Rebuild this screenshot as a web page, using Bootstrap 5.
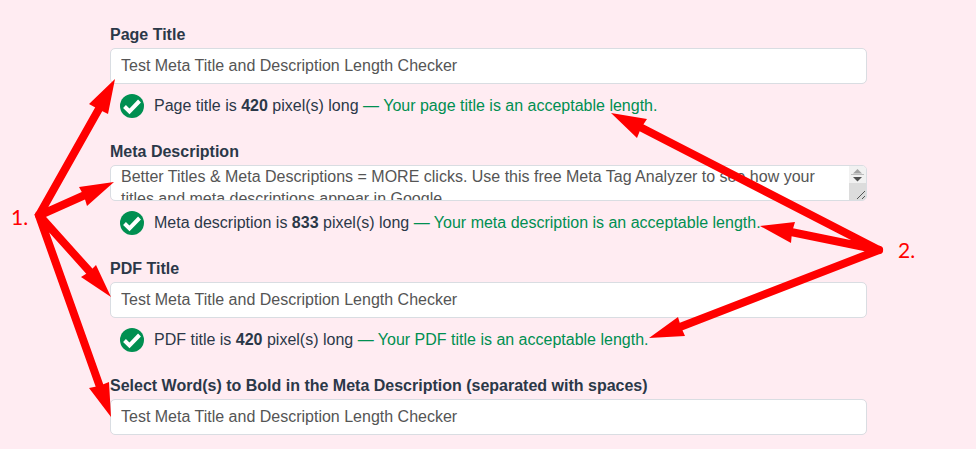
<!DOCTYPE html>
<html lang="en">
<head>
<meta charset="utf-8">
<meta name="viewport" content="width=device-width, initial-scale=1">
<title>Meta Title and Description Length Checker</title>
<link href="https://cdn.jsdelivr.net/npm/bootstrap@5.3.0/dist/css/bootstrap.min.css" rel="stylesheet">
<style>
body { background: #ffecf2; color: #2b3848; font: 16px/24px "Liberation Sans", Arial, sans-serif; }
.checker { padding: 23px 109px 14px 110px; }
.field + .field { margin-top: 22px; }
.field-label { display: block; font-weight: 700; margin-bottom: 1px; }
.field .form-control { height: 36px; padding: 5px 10px; border-color: #d9dde2; border-radius: 5px; color: #555; font-size: 16px; line-height: 24px; }
.field textarea.form-control { min-height: 36px; padding: 0 28px 0 10px; line-height: 22px; resize: none; overflow: hidden; }
.scroller { top: 1px; right: 1px; width: 17px; height: 34px; }
.status { margin-top: 8px; padding-left: 10px; gap: 10px; height: 26px; }
.good { color: #008f51; }
.arrows { top: 0; left: 0; pointer-events: none; font-family: Lato, sans-serif; font-size: 21px; }
</style>
</head>
<body>
<main class="position-relative">
<form class="checker">
  <div class="field">
    <label class="field-label" for="pageTitle">Page Title</label>
    <input class="form-control" id="pageTitle" type="text" value="Test Meta Title and Description Length Checker">
    <div class="status d-flex align-items-end">
      <svg class="flex-shrink-0" width="24" height="24" viewBox="0 0 24 24" aria-hidden="true"><circle cx="12" cy="12" r="12" fill="#008f51"/><path d="M4.500 12.500L9.500 17.500L19.500 7" fill="none" stroke="#fff" stroke-width="4"/></svg>
      <div>Page title is <strong>420</strong> pixel(s) long <span class="good">— Your page title is an acceptable length.</span></div>
    </div>
  </div>
  <div class="field">
    <label class="field-label" for="metaDescription">Meta Description</label>
    <div class="position-relative">
      <textarea class="form-control d-block" id="metaDescription">Better Titles &amp; Meta Descriptions = MORE clicks. Use this free Meta Tag Analyzer to see how your titles and meta descriptions appear in Google.</textarea>
      <svg class="scroller position-absolute" viewBox="0 0 17 34" aria-hidden="true"><path d="M0 0h13q4 0 4 4v13H0z" fill="#f1f1f1"/><path d="M0 17h17v13q0 4-4 4H0z" fill="#dcdcdc"/><path d="M4 7.500L8.500 3l4.500 4.500z" fill="#a3a3a3"/><path d="M2 8.500h13" stroke="#bdbdbd"/><path d="M4 11h9l-4.500 4.500z" fill="#505050"/><path d="M8 33l8-8M13 33l3-3" stroke="#555"/></svg>
    </div>
    <div class="status d-flex align-items-end">
      <svg class="flex-shrink-0" width="24" height="24" viewBox="0 0 24 24" aria-hidden="true"><circle cx="12" cy="12" r="12" fill="#008f51"/><path d="M4.500 12.500L9.500 17.500L19.500 7" fill="none" stroke="#fff" stroke-width="4"/></svg>
      <div>Meta description is <strong>833</strong> pixel(s) long <span class="good">— Your meta description is an acceptable length.</span></div>
    </div>
  </div>
  <div class="field">
    <label class="field-label" for="pdfTitle">PDF Title</label>
    <input class="form-control" id="pdfTitle" type="text" value="Test Meta Title and Description Length Checker">
    <div class="status d-flex align-items-end">
      <svg class="flex-shrink-0" width="24" height="24" viewBox="0 0 24 24" aria-hidden="true"><circle cx="12" cy="12" r="12" fill="#008f51"/><path d="M4.500 12.500L9.500 17.500L19.500 7" fill="none" stroke="#fff" stroke-width="4"/></svg>
      <div>PDF title is <strong>420</strong> pixel(s) long <span class="good">— Your PDF title is an acceptable length.</span></div>
    </div>
  </div>
  <div class="field">
    <label class="field-label" for="boldWords">Select Word(s) to Bold in the Meta Description (separated with spaces)</label>
    <input class="form-control" id="boldWords" type="text" value="Test Meta Title and Description Length Checker">
  </div>
</form>
<svg class="arrows position-absolute" width="976" height="449" viewBox="0 0 976 449" fill="#f00">
  <g stroke="#f00" stroke-width="8">
    <path d="M38 217L100 107M38 216L85 195M38 214L91 273M38 213L100 387"/>
    <path d="M879 250L640 127M879 250L791 232M879 250L680 327" stroke-linecap="round"/>
  </g>
  <circle cx="39" cy="215" r="4"/><circle cx="879" cy="250" r="4"/>
  <path d="M115 79L89 104L98 109L108 114zM114 182L79 187L84 196L87 206zM111 297L96 265L89 272L81 277zM111 417L89 388L99 386L109 382z"/>
  <path d="M611 113L647 119L641 128L637 138zM760 226L795 222L792 232L791 243zM649 338L678 317L681 327L685 336z"/>
  <text x="11" y="225">1.</text>
  <text x="898" y="258">2.</text>
</svg>
</main>
<script src="https://cdn.jsdelivr.net/npm/bootstrap@5.3.0/dist/js/bootstrap.bundle.min.js"></script>
</body>
</html>
